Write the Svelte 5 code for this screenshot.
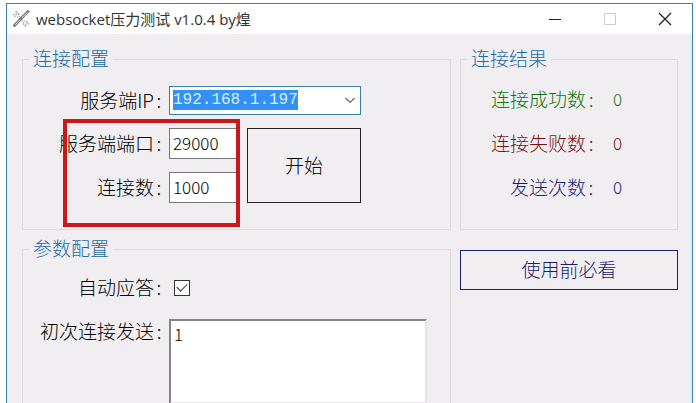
<script lang="ts">
  import { onMount } from 'svelte';

  let ip = $state('192.168.1.197');
  let port = $state('29000');
  let connections = $state('1000');
  let autoReply = $state(true);
  let firstMessage = $state('1');

  const stats = [
    { name: '连接成功数', value: 0, kind: 'ok' },
    { name: '连接失败数', value: 0, kind: 'fail' },
    { name: '发送次数', value: 0, kind: 'sent' }
  ];

  let ipInput: HTMLInputElement;

  onMount(() => {
    ipInput.focus();
    ipInput.select();
  });
</script>

<div class="window">
  <header class="titlebar">
    <svg class="app-icon" viewBox="0 0 18 18" width="18" height="18" aria-hidden="true">
      <path d="M3.5 1.5 L5 3.5 L4 5 L1.5 4 C1.2 6 2.8 7.3 4.8 6.6 L11.5 12.8 C11 15 12.5 16.6 14.8 16 L13.3 14.3 L14.4 13.2 L16.6 14.6 C17.2 12.5 15.5 11 13.2 11.5 L6.4 5.2 C7 3.2 5.5 1.4 3.5 1.5 Z" fill="#f4f4f4" stroke="#888" stroke-width=".8" stroke-dasharray="2 1" />
      <path d="M16 1.5 L9.3 8.2 M8.8 8.8 L2.5 15.5" fill="none" stroke="#777" stroke-width="2.8" stroke-linecap="round" />
      <path d="M15.6 2.2 L10 7.6 M8 9.8 L3.2 14.8" fill="none" stroke="#e4e4e4" stroke-width="1" />
    </svg>
    <h1>websocket压力测试 v1.0.4 by煌</h1>
    <div class="controls">
      <button type="button" aria-label="最小化">
        <svg viewBox="0 0 14 14" width="14" height="14"><path d="M1 7.5 H13" stroke="#222" /></svg>
      </button>
      <button type="button" aria-label="最大化" disabled>
        <svg viewBox="0 0 14 14" width="14" height="14"><path d="M1.5 1.5 H12.5 V12.5 H1.5 Z" fill="none" stroke="#ccc" /></svg>
      </button>
      <button type="button" aria-label="关闭">
        <svg viewBox="0 0 14 14" width="14" height="14"><path d="M1 1 L13 13 M13 1 L1 13" stroke="#222" stroke-width="1.3" /></svg>
      </button>
    </div>
  </header>

  <main>
    <div class="column">
      <fieldset class="group connect">
        <legend>连接配置</legend>
        <label for="ip">服务端IP<span class="colon">:</span></label>
        <div class="combo">
          <input id="ip" bind:this={ipInput} bind:value={ip} />
          <button type="button" aria-label="展开">
            <svg viewBox="0 0 10 7" width="10" height="7"><path d="M.5 1 L5 5.5 L9.5 1" fill="none" stroke="#666" stroke-width="1.2" /></svg>
          </button>
        </div>

        <label for="port">服务端端口<span class="colon">:</span></label>
        <input id="port" class="field" bind:value={port} />
        <button class="start" type="button">开始</button>

        <label for="connections">连接数<span class="colon">:</span></label>
        <input id="connections" class="field" bind:value={connections} />

        <div class="highlight"></div>
      </fieldset>

      <fieldset class="group params">
        <legend>参数配置</legend>
        <label for="auto">自动应答<span class="colon">:</span></label>
        <input id="auto" class="check" type="checkbox" bind:checked={autoReply} />

        <label class="top" for="first">初次连接发送<span class="colon">:</span></label>
        <textarea id="first" bind:value={firstMessage}></textarea>
      </fieldset>
    </div>

    <div class="column side">
      <fieldset class="group results">
        <legend>连接结果</legend>
        {#each stats as stat}
          <span class={stat.kind}>{stat.name}<span class="colon">:</span></span>
          <output class="value {stat.kind}">{stat.value}</output>
        {/each}
      </fieldset>
      <button class="readme" type="button">使用前必看</button>
    </div>
  </main>
</div>

<style>
  :global(body) {
    background: #fff;
    overflow: hidden;
  }

  .window {
    --panel: #f0eef1;
    --navy: #1c1c70;

    box-sizing: border-box;
    height: calc(100vh - 3px);
    margin: 3px 3px 0 6px;
    overflow: hidden;
    border: 1px solid #3a7fa5;
    border-bottom: 0;
    background: var(--panel);
    box-shadow: inset -2px 0 #d3f3fc;
    color: #000;
    font-family: 'Noto Sans CJK SC', sans-serif;
    font-size: 19px;
    font-weight: 300;
    line-height: 20px;
  }

  button, input, textarea {
    box-sizing: border-box;
    margin: 0;
    border-radius: 0;
    color: inherit;
    font: inherit;
    outline: none;
  }

  .titlebar {
    display: flex;
    align-items: center;
    height: 30px;
    padding-left: 5px;
    background: #fff;
  }
  .titlebar h1 {
    flex: 1;
    margin: 0 0 0 6px;
    color: #333;
    font-family: 'Open Sans', 'Noto Sans CJK SC', sans-serif;
    font-size: 15px;
    font-weight: 400;
    white-space: nowrap;
  }
  .controls { display: flex; }
  .controls button {
    display: grid;
    place-items: center;
    width: 55px;
    height: 30px;
    padding: 0;
    border: 0;
    background: none;
  }

  main {
    display: grid;
    grid-template-columns: minmax(0, 1fr) 218px;
    gap: 9px;
    padding: 15px 14px 0 15px;
  }
  .column {
    display: flex;
    flex-direction: column;
    gap: 9px;
  }
  .side { gap: 20px; }

  .group {
    position: relative;
    min-width: 0;
    margin: 0;
    border: 1px solid #dddbde;
  }
  legend {
    margin-left: -11px;
    padding: 0 4px 2px;
    color: #1e6ba5;
    line-height: 18px;
  }
  label {
    padding-bottom: 2px;
    text-align: right;
    white-space: nowrap;
  }
  .colon {
    display: inline-block;
    width: 10px;
    text-align: center;
  }

  .connect, .params {
    display: grid;
    column-gap: 5px;
    align-items: center;
  }
  .connect {
    grid-template-columns: 124px 68px 119px;
    row-gap: 13px;
    padding: 17px 17px 26px;
  }

  .combo {
    display: flex;
    grid-column: 2 / 4;
    box-sizing: border-box;
    height: 29px;
    border: 1px solid #3a7fa5;
    background: #fff;
  }
  .combo input {
    flex: 1;
    min-width: 0;
    padding: 0 3px 2px;
    border: 0;
    background: none;
    font-family: 'Liberation Mono', monospace;
    font-size: 16px;
  }
  .combo input::selection {
    background: #3390f5;
    color: #d8edff;
  }
  .combo button {
    display: grid;
    place-items: center;
    width: 20px;
    padding: 0;
    border: 0;
    background: none;
  }

  .field {
    width: 100%;
    height: 31px;
    padding: 0 3px 3px;
    border: 1px solid #777;
    background: #fff;
    font-size: 17px;
  }
  .start {
    grid-column: 3;
    grid-row: 2 / 4;
    height: 75px;
    margin-left: 5px;
    padding-bottom: 3px;
    border: 1px solid #222;
    background: none;
  }

  /* red marker around port and connection count */
  .highlight {
    position: absolute;
    top: 50px;
    left: 40px;
    box-sizing: border-box;
    width: 177px;
    height: 108px;
    border: 4px solid #c8181c;
    pointer-events: none;
  }

  .params {
    grid-template-columns: 124px minmax(0, 1fr);
    row-gap: 20px;
    padding: 18px 23px 26px 17px;
  }
  .check {
    display: grid;
    place-items: center;
    width: 16px;
    height: 16px;
    margin-left: 5px;
    border: 1px solid #333;
    background: #fff;
    appearance: none;
  }
  .check:checked::before {
    content: '';
    width: 9px;
    height: 5px;
    margin-bottom: 4px;
    border: solid #333;
    border-width: 0 0 1px 1px;
    transform: rotate(-45deg);
  }
  .top {
    align-self: start;
    padding-top: 2px;
  }
  textarea {
    height: 85px;
    padding: 3px 3px;
    border: 2px solid #858387;
    border-right-color: #e6e4e7;
    border-bottom-color: #e6e4e7;
    background: #fff;
    font-size: 17px;
    resize: none;
  }

  .results {
    display: grid;
    grid-template-columns: 105px auto;
    justify-content: start;
    gap: 24px 17px;
    padding: 20px 30px 32px;
  }
  .results legend { margin-left: -24px; }
  .results > span { text-align: right; }
  .value { font-size: 17px; }
  .ok { color: #0c780c; }
  .fail { color: #7a1010; }
  .sent { color: var(--navy); }

  .readme {
    height: 40px;
    padding-bottom: 3px;
    border: 1px solid var(--navy);
    background: none;
    color: var(--navy);
  }
</style>
